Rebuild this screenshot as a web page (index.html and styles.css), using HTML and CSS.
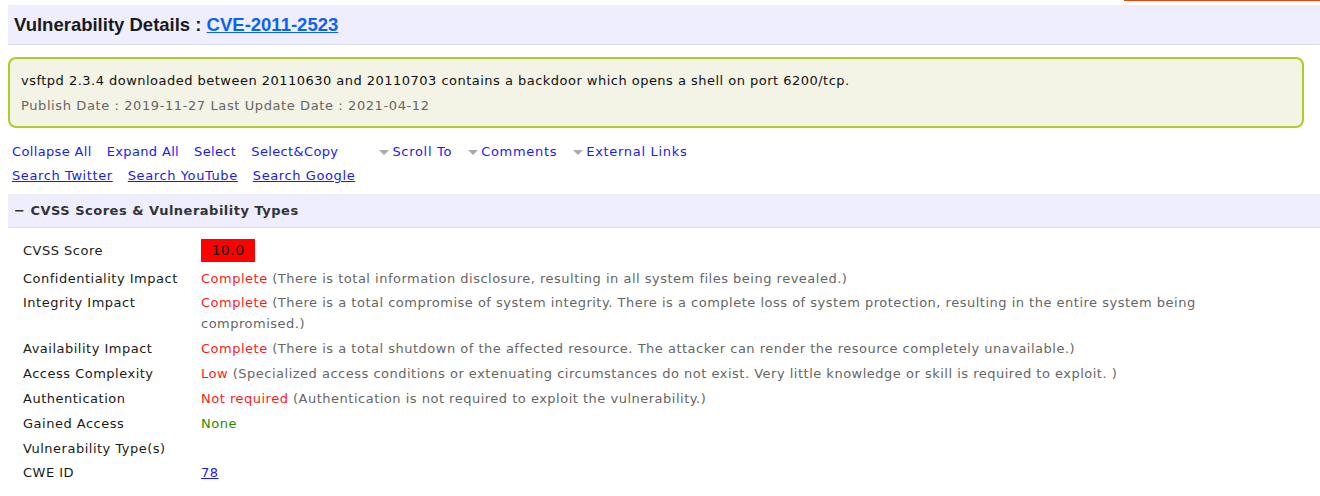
FILE: index.html
```html
<!DOCTYPE html>
<html>
<head>
<meta charset="utf-8">
<link rel="stylesheet" href="styles.css">
</head>
<body>
<div class="topline"><span class="redline"></span></div>
<div class="page">
  <h1 class="title">Vulnerability Details : <a href="#" class="cve">CVE-2011-2523</a></h1>
  <div class="summary">
    <div class="desc">vsftpd 2.3.4 downloaded between 20110630 and 20110703 contains a backdoor which opens a shell on port 6200/tcp.</div>
    <div class="dates">Publish Date : 2019-11-27 Last Update Date : 2021-04-12</div>
  </div>
  <div class="links">
    <div class="linkrow">
      <a href="#">Collapse All</a>
      <a href="#">Expand All</a>
      <a href="#">Select</a>
      <a href="#">Select&amp;Copy</a>
      <span class="menus">
        <a href="#" class="drop"><span class="tri"></span>Scroll To</a>
        <a href="#" class="drop"><span class="tri"></span>Comments</a>
        <a href="#" class="drop"><span class="tri"></span>External Links</a>
      </span>
    </div>
    <div class="linkrow under">
      <a href="#">Search Twitter</a>
      <a href="#">Search YouTube</a>
      <a href="#">Search Google</a>
    </div>
  </div>
  <div class="section-head">− CVSS Scores &amp; Vulnerability Types</div>
  <table class="details">
    <tr class="score-row"><th>CVSS Score</th><td><span class="badge">10.0</span></td></tr>
    <tr class="tight"><th>Confidentiality Impact</th><td><span class="red">Complete</span> <span class="note">(There is total information disclosure, resulting in all system files being revealed.)</span></td></tr>
    <tr><th>Integrity Impact</th><td><span class="red">Complete</span> <span class="note">(There is a total compromise of system integrity. There is a complete loss of system protection, resulting in the entire system being compromised.)</span></td></tr>
    <tr><th>Availability Impact</th><td><span class="red">Complete</span> <span class="note">(There is a total shutdown of the affected resource. The attacker can render the resource completely unavailable.)</span></td></tr>
    <tr><th>Access Complexity</th><td><span class="red">Low</span> <span class="note">(Specialized access conditions or extenuating circumstances do not exist. Very little knowledge or skill is required to exploit. )</span></td></tr>
    <tr><th>Authentication</th><td><span class="red">Not required</span> <span class="note">(Authentication is not required to exploit the vulnerability.)</span></td></tr>
    <tr><th>Gained Access</th><td><span class="green">None</span></td></tr>
    <tr><th>Vulnerability Type(s)</th><td></td></tr>
    <tr class="last"><th>CWE ID</th><td><a href="#" class="cwe">78</a></td></tr>
  </table>
</div>
</body>
</html>
```
FILE: styles.css
```css
html, body {
  margin: 0;
  padding: 0;
  background: #ffffff;
  overflow: hidden;
}
body {
  font-family: "DejaVu Sans", Verdana, sans-serif;
  font-size: 13px;
  letter-spacing: 0.5px;
  color: #222222;
}
.topline {
  display: flex;
  justify-content: flex-end;
  height: 5px;
}
.redline {
  display: block;
  width: 196px;
  height: 1px;
  background: #e8430f;
}
.page {
  padding-left: 8px;
}
.title {
  margin: 0;
  height: 39px;
  border-bottom: 1px solid #dcdcf6;
  background: #eeeeff;
  font-family: "Liberation Sans", Arial, sans-serif;
  font-weight: bold;
  font-size: 18.5px;
  letter-spacing: 0;
  line-height: 39px;
  padding-left: 6px;
  color: #1a1a1a;
}
.cve {
  color: #0b62f5;
  text-decoration: underline;
}
.summary {
  margin: 12px 16px 0 0;
  height: 66px;
  padding: 1px 0 0 11px;
  box-sizing: content-box;
  background: #f3f3e6;
  border: 2px solid #aecb28;
  border-radius: 8px;
  display: flex;
  flex-direction: column;
  justify-content: center;
}
.desc {
  line-height: 24px;
  color: #111111;
  letter-spacing: 0.48px;
}
.dates {
  line-height: 25px;
  color: #666666;
  letter-spacing: 0.6px;
}
.links {
  padding: 12px 0 6px 4px;
  border-bottom: 1px solid #ececf8;
}
.linkrow {
  display: flex;
  align-items: center;
  line-height: 24px;
  gap: 15px;
  letter-spacing: 0.35px;
}
.linkrow a {
  color: #1b1bf0;
  text-decoration: none;
}
.linkrow.under {
  letter-spacing: 0.6px;
}
.linkrow.under a {
  text-decoration: underline;
}
.menus {
  display: flex;
  gap: 16px;
  margin-left: 26px;
  letter-spacing: 0.7px;
}
.drop {
  white-space: nowrap;
}
.tri {
  display: inline-block;
  width: 0;
  height: 0;
  border-left: 5px solid transparent;
  border-right: 5px solid transparent;
  border-top: 5px solid #aaaaaa;
  margin-right: 3px;
  vertical-align: middle;
}
.section-head {
  height: 32px;
  line-height: 32px;
  background: #eeeeff;
  border-bottom: 1px solid #dcdcf6;
  font-weight: bold;
  color: #333333;
  padding-left: 6px;
  letter-spacing: 0.5px;
}
.details {
  border-collapse: collapse;
  margin: 9px 0 0 15px;
}
.details th {
  text-align: left;
  font-weight: normal;
  width: 178px;
  padding: 2px 0;
  line-height: 21px;
  vertical-align: top;
  color: #1a1a1a;
}
.details td {
  padding: 2px 0;
  line-height: 21px;
  vertical-align: top;
  padding-right: 100px;
}
.score-row th, .score-row td {
  padding: 2px 0 4px;
  line-height: 23px;
}
.tight th, .tight td {
  padding-bottom: 1px;
}
.last th, .last td {
  padding-top: 1px;
}
.badge {
  display: inline-block;
  background: #ff0000;
  color: #111111;
  width: 54px;
  text-align: center;
  font-size: 14px;
  line-height: 23px;
}
.red { color: #ff1a1a; }
.note { color: #666666; }
.green { color: #2e8b00; }
.cwe { color: #1b1bf0; text-decoration: underline; }
```
